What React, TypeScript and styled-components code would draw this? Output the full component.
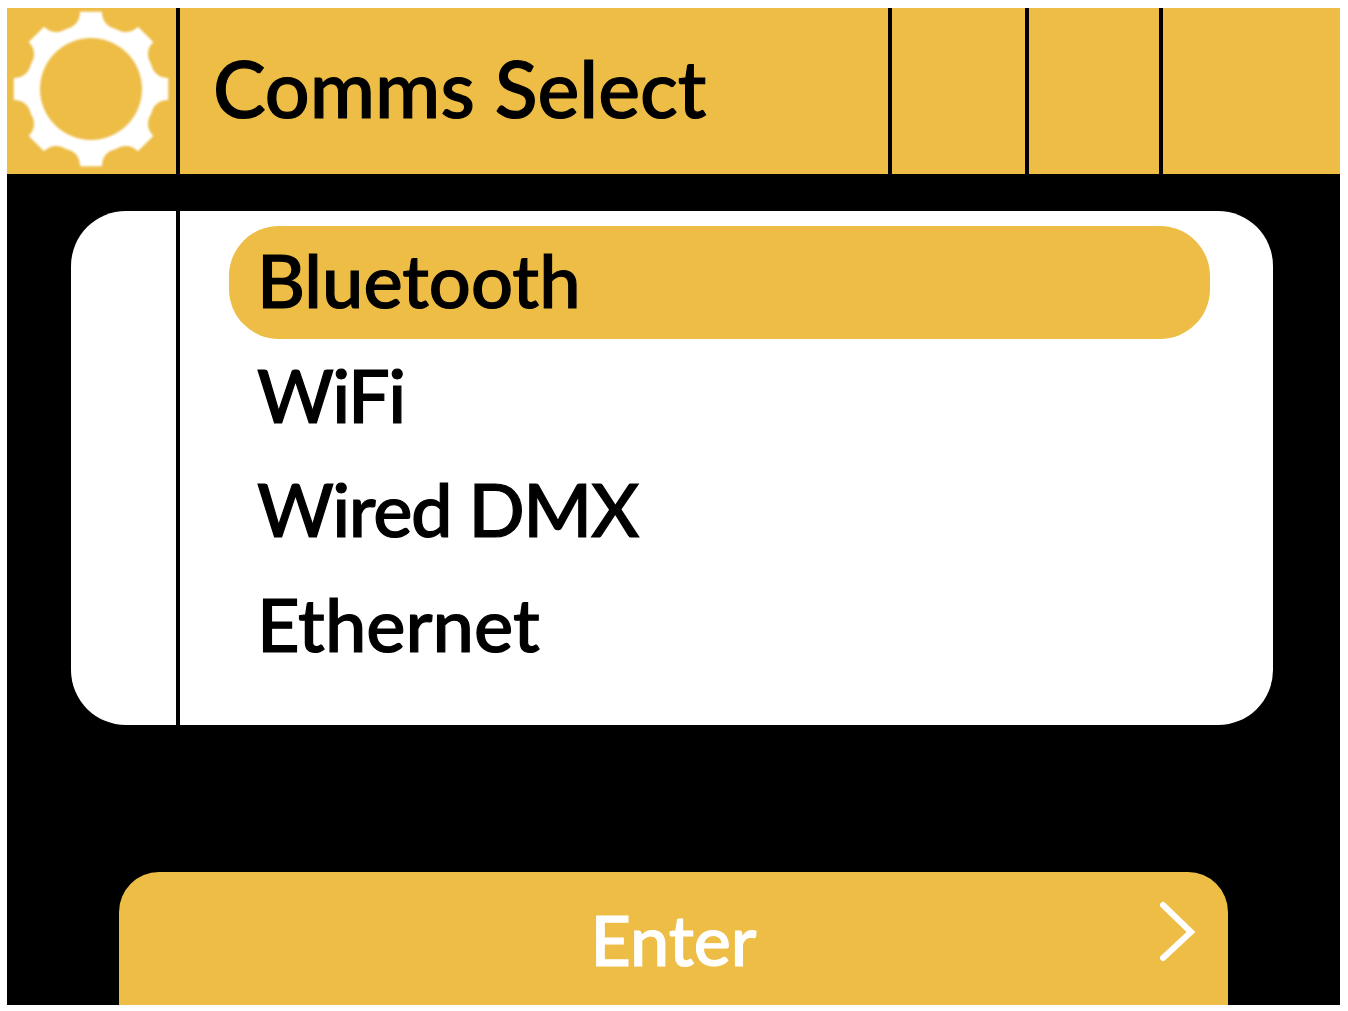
import styled, { createGlobalStyle } from "styled-components";

const amber = "#edbd46";
const fontStack = `"Lato", "Noto Sans", "Liberation Sans", sans-serif`;
const menuItems = [
  { label: "Bluetooth", tracking: 0 },
  { label: "WiFi", tracking: -1.5 },
  { label: "Wired DMX", tracking: -1.4 },
  { label: "Ethernet", tracking: 0 },
];
const statusCells = [137, 134, 181];

const GlobalStyle = createGlobalStyle`
  html, body {
    margin: 0;
    padding: 0;
    background: #fff;
  }
  body {
    font-family: ${fontStack};
  }
`;

const Screen = styled.main`
  width: 1333px;
  height: 997px;
  margin: 8px 0 0 7px;
  background: #000;
  display: flex;
  flex-direction: column;
  overflow: hidden;
`;

const Header = styled.header`
  height: 166px;
  flex: none;
  display: flex;
  background: ${amber};
`;

const GearCell = styled.div`
  width: 169px;
  flex: none;
  display: flex;
  align-items: center;
  justify-content: center;
`;

const GearIcon = styled.svg`
  filter: blur(0.8px);
`;

const TitleCell = styled.div`
  flex: 1;
  display: flex;
  align-items: center;
  padding: 0 0 7px 33px;
  border-left: 4px solid #000;
`;

const Title = styled.h1`
  margin: 0;
  font-size: 79px;
  font-weight: 500;
  line-height: 1;
  color: #000;
  -webkit-text-stroke: 1.2px #000;
`;

const StatusCell = styled.div<{ $width: number }>`
  width: ${(props) => props.$width}px;
  box-sizing: border-box;
  flex: none;
  border-left: 4px solid #000;
`;

const Panel = styled.section`
  height: 514px;
  flex: none;
  margin: 37px 67px 0 64px;
  background: #fff;
  border-radius: 55px;
  display: flex;
  overflow: hidden;
`;

const Rail = styled.div`
  width: 105px;
  flex: none;
  border-right: 4px solid #000;
`;

const MenuList = styled.ul`
  flex: 1;
  list-style: none;
  margin: 0;
  padding: 15px 63px 0 49px;
  display: flex;
  flex-direction: column;
  gap: 1.5px;
`;

const MenuRow = styled.li<{ $selected: boolean; $tracking: number }>`
  height: 113px;
  flex: none;
  box-sizing: border-box;
  display: flex;
  align-items: center;
  padding: 0 0 6px 28px;
  font-size: 74px;
  font-weight: 500;
  letter-spacing: ${(props) => props.$tracking}px;
  color: #000;
  -webkit-text-stroke: 1.2px #000;
  border-radius: 50px;
  background: ${(props) => (props.$selected ? amber : "transparent")};
`;

const EnterButton = styled.button`
  margin: 147px 112px 0;
  height: 133px;
  flex: none;
  position: relative;
  border: 0;
  padding: 0;
  background: ${amber};
  border-radius: 40px 40px 0 0;
  font-family: ${fontStack};
  font-size: 70px;
  font-weight: 500;
  color: #fff;
  -webkit-text-stroke: 1.2px #fff;
`;

const ChevronIcon = styled.svg`
  position: absolute;
  right: 30px;
  top: 28px;
`;

// gear outline: 8 flared teeth around a ring, with a round hole
function gearPath(cx: number, cy: number) {
  const outer = 78;
  const root = 65;
  const hole = 51;
  const parts: string[] = [];
  for (let i = 0; i < 8; i++) {
    const angle = (i * Math.PI) / 4 - Math.PI / 2;
    const point = (radius: number, offset: number) => {
      const x = cx + radius * Math.cos(angle + offset);
      const y = cy + radius * Math.sin(angle + offset);
      return `${x.toFixed(1)} ${y.toFixed(1)}`;
    };
    parts.push(
      `${i === 0 ? "M" : "L"}${point(root, -0.3)}`,
      `Q${point(root + 3, -0.16)} ${point(outer, -0.14)}`,
      `L${point(outer, 0.14)}`,
      `Q${point(root + 3, 0.16)} ${point(root, 0.3)}`,
      `A${root} ${root} 0 0 1 ${point(root, Math.PI / 4 - 0.3)}`
    );
  }
  parts.push(
    "Z",
    `M${cx - hole} ${cy}`,
    `A${hole} ${hole} 0 1 0 ${cx + hole} ${cy}`,
    `A${hole} ${hole} 0 1 0 ${cx - hole} ${cy}Z`
  );
  return parts.join(" ");
}

const App = () => {
  return (
    <>
      <GlobalStyle />
      <Screen>
        <Header>
          <GearCell>
            <GearIcon width="169" height="166" viewBox="0 0 169 166">
              <path d={gearPath(84, 81)} fill="#fff" fillRule="evenodd" />
            </GearIcon>
          </GearCell>
          <TitleCell>
            <Title>Comms Select</Title>
          </TitleCell>
          {statusCells.map((width) => (
            <StatusCell key={width} $width={width} />
          ))}
        </Header>
        <Panel>
          <Rail />
          <MenuList>
            {menuItems.map((item, index) => (
              <MenuRow key={item.label} $selected={index === 0} $tracking={item.tracking}>
                {item.label}
              </MenuRow>
            ))}
          </MenuList>
        </Panel>
        <EnterButton>
          Enter
          <ChevronIcon width="40" height="64" viewBox="0 0 40 64">
            <path
              d="M5 5 L33 32 L5 58"
              fill="none"
              stroke="#fff"
              strokeWidth="6"
              strokeLinecap="round"
              strokeLinejoin="miter"
            />
          </ChevronIcon>
        </EnterButton>
      </Screen>
    </>
  );
};

export default App;
